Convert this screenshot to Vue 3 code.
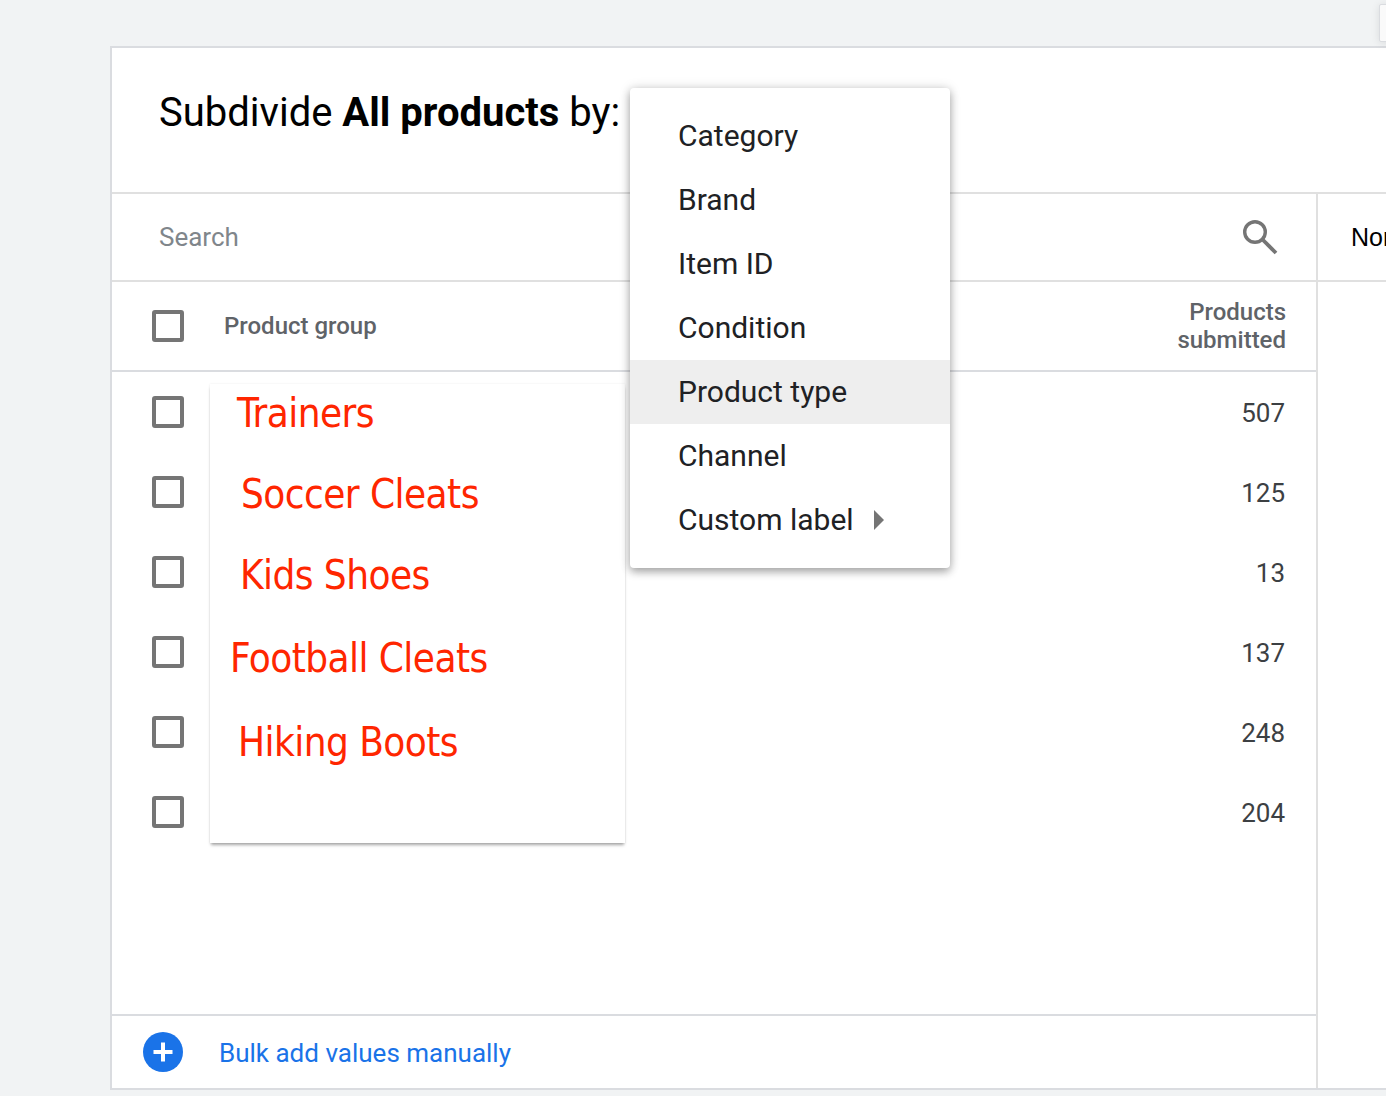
<script setup>
const menuItems = ['Category', 'Brand', 'Item ID', 'Condition', 'Product type', 'Channel', 'Custom label'];
const counts = [507, 125, 13, 137, 248, 204];
const suggestions = [
  { label: 'Trainers', left: 27, top: 6 },
  { label: 'Soccer Cleats', left: 31, top: 34 },
  { label: 'Kids Shoes', left: 30, top: 34 },
  { label: 'Football Cleats', left: 20, top: 36 },
  { label: 'Hiking Boots', left: 28, top: 37 },
];
</script>

<template>
  <div class="page">
    <div class="corner-tab"></div>

    <section class="card">
      <header class="card-head">
        <h1>Subdivide <strong>All products</strong> by:</h1>
      </header>

      <div class="card-body">
        <div class="main-col">
          <div class="search-row">
            <span class="search-text">Search</span>
            <svg class="search-icon" viewBox="0 0 36 36" fill="none" aria-hidden="true">
              <circle cx="13" cy="13" r="10.3" stroke="currentColor" stroke-width="3.4" />
              <path d="M20.5 20.5 34 34" stroke="currentColor" stroke-width="3.8" />
            </svg>
          </div>

          <div class="head-row">
            <span class="checkbox"></span>
            <span class="head-label">Product group</span>
            <span class="head-count">Products<br />submitted</span>
          </div>

          <div class="rows">
            <div v-for="count in counts" :key="count" class="row">
              <span class="checkbox"></span>
              <span class="count">{{ count }}</span>
            </div>
          </div>

          <footer class="foot-row">
            <span class="add-btn">
              <svg viewBox="0 0 40 40" aria-hidden="true">
                <path d="M18 10.5h4V18h7.5v4H22v7.5h-4V22h-7.5v-4H18Z" fill="#fff" />
              </svg>
            </span>
            <a class="add-link">Bulk add values manually</a>
          </footer>
        </div>

        <div class="side-col">
          <div class="side-top"><span>Normal</span></div>
        </div>
      </div>
    </section>

    <div class="suggest-pop">
      <div
        v-for="item in suggestions"
        :key="item.label"
        class="suggest-item"
        :style="{ marginLeft: item.left + 'px', marginTop: item.top + 'px' }"
      >
        {{ item.label }}
      </div>
    </div>

    <ul class="menu">
      <li v-for="item in menuItems" :key="item" :class="{ active: item === 'Product type' }">
        <span class="menu-text">{{ item }}</span>
        <svg v-if="item === 'Custom label'" class="menu-arrow" viewBox="0 0 10 20" aria-hidden="true">
          <path d="M0 0 10 10 0 20Z" fill="currentColor" />
        </svg>
      </li>
    </ul>
  </div>
</template>

<style>
html,
body {
  margin: 0;
  height: 1096px;
  overflow: hidden;
  background: #f1f3f4;
}
</style>

<style scoped>
.page {
  position: relative;
  width: 1386px;
  height: 1096px;
  overflow: hidden;
  padding: 46px 0 0 110px;
  box-sizing: border-box;
  font-family: Roboto, "Liberation Sans", sans-serif;
  color: #000;
}

.corner-tab {
  position: absolute;
  top: 4px;
  right: -6px;
  width: 13px;
  height: 38px;
  box-sizing: border-box;
  background: #fafafa;
  border: 1px solid #dadce0;
  border-radius: 2px;
  box-shadow: 0 1px 8px rgba(0, 0, 0, 0.1);
}

.card {
  width: 1400px;
  height: 1044px;
  box-sizing: border-box;
  display: flex;
  flex-direction: column;
  background: #fff;
  border: 2px solid #dadce0;
}

.card-head {
  height: 146px;
  flex: none;
  box-sizing: border-box;
  border-bottom: 2px solid #e0e0e0;
  padding: 40px 0 0 47px;
}

.card-head h1 {
  margin: 0;
  font-size: 40px;
  line-height: 50px;
  font-weight: 400;
}

.card-head strong {
  font-weight: 700;
}

.card-body {
  flex: 1;
  display: flex;
  min-height: 0;
}

.main-col {
  width: 1206px;
  flex: none;
  box-sizing: border-box;
  display: flex;
  flex-direction: column;
  border-right: 2px solid #e0e0e0;
}

.search-row {
  height: 88px;
  flex: none;
  box-sizing: border-box;
  display: flex;
  align-items: center;
  justify-content: space-between;
  padding: 0 38px 0 47px;
  border-bottom: 2px solid #e0e0e0;
}

.search-text {
  font-size: 26px;
  color: #80868b;
}

.search-icon {
  width: 36px;
  height: 36px;
  color: #757575;
}

.head-row {
  height: 90px;
  flex: none;
  box-sizing: border-box;
  display: flex;
  align-items: center;
  padding: 0 30px 0 40px;
  border-bottom: 2px solid #dadce0;
  color: #5f6368;
  font-size: 24px;
  font-weight: 500;
}

.head-label {
  margin-left: 40px;
}

.head-count {
  margin-left: auto;
  text-align: right;
  line-height: 28px;
}

.checkbox {
  width: 32px;
  height: 32px;
  flex: none;
  box-sizing: border-box;
  border: 4px solid #757575;
  border-radius: 3px;
}

.rows {
  flex: 1;
}

.row {
  height: 80px;
  display: flex;
  align-items: center;
  padding: 0 31px 0 40px;
}

.count {
  margin-left: auto;
  margin-top: 2px;
  font-size: 26px;
  color: #3c4043;
}

.foot-row {
  height: 74px;
  flex: none;
  box-sizing: border-box;
  display: flex;
  align-items: center;
  padding: 0 0 0 31px;
  border-top: 2px solid #dadce0;
}

.add-btn {
  width: 40px;
  height: 40px;
  border-radius: 50%;
  background: #1a73e8;
  display: block;
}

.add-btn svg {
  display: block;
  width: 40px;
  height: 40px;
}

.add-link {
  margin-left: 36px;
  margin-top: 2px;
  font-size: 26px;
  color: #1a73e8;
}

.side-col {
  flex: 1;
}

.side-top {
  height: 88px;
  box-sizing: border-box;
  display: flex;
  align-items: center;
  padding-left: 33px;
  border-bottom: 2px solid #e0e0e0;
  font-family: "Liberation Sans", Arial, sans-serif;
  font-size: 25px;
}

.suggest-pop {
  position: absolute;
  left: 210px;
  top: 384px;
  width: 415px;
  height: 459px;
  background: #fff;
  box-shadow: 0 3px 3px -1px rgba(0, 0, 0, 0.35), 0 0 2px rgba(0, 0, 0, 0.08);
  color: #ff2600;
  font-family: "DejaVu Sans", sans-serif;
  font-stretch: condensed;
  font-size: 40px;
  letter-spacing: -0.55px;
  line-height: 47px;
}

.menu {
  position: absolute;
  left: 630px;
  top: 88px;
  width: 320px;
  margin: 0;
  padding: 16px 0;
  box-sizing: border-box;
  list-style: none;
  background: #fff;
  border-radius: 4px;
  box-shadow: 0 4px 8px rgba(0, 0, 0, 0.3), 0 0 12px rgba(0, 0, 0, 0.14);
  font-size: 30px;
  color: #202124;
}

.menu li {
  height: 64px;
  display: flex;
  align-items: center;
  padding-left: 48px;
}

.menu li.active {
  background: #eeeeee;
}

.menu-text {
  margin-bottom: 2px;
}

.menu-arrow {
  width: 10px;
  height: 20px;
  margin-left: 20px;
  color: #757575;
}
</style>
